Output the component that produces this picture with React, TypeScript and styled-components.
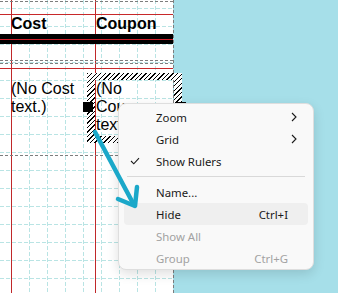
import React from 'react';
import styled, { createGlobalStyle } from 'styled-components';

const GlobalStyle = createGlobalStyle`
  html, body { margin: 0; padding: 0; width: 338px; height: 293px; overflow: hidden; background: #a6dfe9; }
  #root { width: 338px; height: 293px; }
`;

const Stage = styled.div`
  position: relative;
  width: 338px;
  height: 293px;
  display: flex;
  align-items: stretch;
`;

const Page = styled.div`
  position: relative;
  width: 173px;
  height: 293px;
  box-sizing: border-box;
  padding-top: 1px;
  display: flex;
  flex-direction: column;
  background-color: #fff;
  background-image:
    linear-gradient(to right, transparent 11px, #c0282a 11px 12px, transparent 12px 95px, #c0282a 95px 96px, transparent 96px),
    conic-gradient(from 270deg at 1px 4px, #b9e4e4 0 90deg, transparent 0),
    conic-gradient(from 270deg at 4px 1px, #b9e4e4 0 90deg, transparent 0);
  background-size: 100% 100%, 18px 6px, 6px 18px;
  background-position: 0 0, 11px 0, 0 8px;
  font-family: "Liberation Sans", Arial, sans-serif;
  color: #000;
`;

const PageEdge = styled.div`
  width: 1px;
  height: 293px;
  flex: none;
  background: repeating-linear-gradient(to bottom, #7d7d7d 0 3px, transparent 3px 5px);
`;

const DashedRule = styled.div<{ $mt?: number }>`
  flex: none;
  height: 1px;
  margin-top: ${(p) => p.$mt ?? 0}px;
  background: repeating-linear-gradient(to right, #7d7d7d 0 3px, transparent 3px 5px);
`;

const RedRule = styled.div<{ $mt?: number }>`
  flex: none;
  height: 1px;
  margin-top: ${(p) => p.$mt ?? 0}px;
  background: #c8282a;
`;

const ThickRule = styled.div`
  flex: none;
  height: 10px;
  background: linear-gradient(to bottom, #000 0 5px, #d0202a 5px 6px, #000 6px 10px);
`;

const HeaderBand = styled.div`
  flex: none;
  height: 19px;
  display: grid;
  grid-template-columns: 11px 84px 78px;
`;

const HeaderCell = styled.div<{ $pad?: number }>`
  font-size: 16px;
  font-weight: 700;
  line-height: 17px;
  padding-left: ${(p) => p.$pad ?? 0}px;
  white-space: nowrap;
`;

const DetailBand = styled.div`
  flex: none;
  height: 86px;
  box-sizing: border-box;
  padding-top: 11px;
  display: grid;
  grid-template-columns: 11px 76px 8px 78px;
  align-items: start;
`;

const Field = styled.div<{ $pad?: number }>`
  position: relative;
  height: 56px;
  font-size: 16px;
  line-height: 18px;
  padding-left: ${(p) => p.$pad ?? 0}px;
`;

const SelectionFrame = styled.div`
  position: absolute;
  top: -7px;
  bottom: -7px;
  left: -8px;
  right: -9px;
  border-style: solid;
  border-width: 7px 8px;
  border-image: repeating-linear-gradient(135deg, #000 0 1px, #fff 1px 3.2px) 7 8;
  pointer-events: none;
`;

const Handle = styled.span<{ $side: 'left' | 'right' }>`
  position: absolute;
  top: 22px;
  width: 10px;
  height: 10px;
  background: #000;
  ${(p) => (p.$side === 'left' ? 'left: -12px;' : 'right: -13px;')}
`;

const Menu = styled.div`
  position: absolute;
  left: 118px;
  top: 103px;
  width: 196px;
  height: 167px;
  box-sizing: border-box;
  padding: 2px 5px 0;
  background: #f9f9f9;
  border: 1px solid #dedede;
  border-radius: 8px;
  box-shadow: 0 4px 12px rgba(0, 0, 0, 0.13);
  font-family: "Noto Sans", "Open Sans", sans-serif;
  font-size: 11.4px;
  display: flex;
  flex-direction: column;
`;

const MenuItem = styled.div<{ $active?: boolean; $disabled?: boolean }>`
  height: 22px;
  display: grid;
  grid-template-columns: 32px 1fr auto;
  align-items: center;
  padding-right: 11px;
  border-radius: 4px;
  color: ${(p) => (p.$disabled ? '#a2a2a2' : '#1a1a1a')};
  background: ${(p) => (p.$active ? '#efefef' : 'transparent')};
`;

const CheckCell = styled.span`
  display: flex;
  align-items: center;
  padding-left: 6px;
`;

const Shortcut = styled.span`
  margin-right: 9px;
`;

const Separator = styled.div`
  height: 1px;
  margin: 4px 3px;
  background: #d9d9d9;
`;

const Overlay = styled.svg`
  position: absolute;
  left: 0;
  top: 0;
  pointer-events: none;
`;

const Chevron = () => (
  <svg width="6" height="10" viewBox="0 0 6 10">
    <path d="M1 1 L5 5 L1 9" fill="none" stroke="#1a1a1a" strokeWidth="1.1" />
  </svg>
);

const Check = () => (
  <svg width="10" height="8" viewBox="0 0 10 8">
    <path d="M1 4 L3.8 6.8 L9 1.2" fill="none" stroke="#1a1a1a" strokeWidth="1.1" />
  </svg>
);

export default function App() {
  return (
    <>
      <GlobalStyle />
      <Stage>
        <Page>
          <DashedRule />
          <RedRule $mt={12} />
          <HeaderBand>
            <span />
            <HeaderCell>Cost</HeaderCell>
            <HeaderCell $pad={1}>Coupon</HeaderCell>
          </HeaderBand>
          <ThickRule />
          <DashedRule $mt={16} />
          <DashedRule $mt={2} />
          <RedRule $mt={4} />
          <DetailBand>
            <span />
            <Field>(No Cost text.)</Field>
            <span />
            <Field $pad={1}>
              (No Coupon text.)
              <SelectionFrame />
              <Handle $side="left" />
              <Handle $side="right" />
            </Field>
          </DetailBand>
          <DashedRule />
        </Page>
        <PageEdge />
        <Menu>
          <MenuItem><span /><span>Zoom</span><Chevron /></MenuItem>
          <MenuItem><span /><span>Grid</span><Chevron /></MenuItem>
          <MenuItem><CheckCell><Check /></CheckCell><span>Show Rulers</span><span /></MenuItem>
          <Separator />
          <MenuItem><span /><span>Name...</span><span /></MenuItem>
          <MenuItem $active><span /><span>Hide</span><Shortcut>Ctrl+I</Shortcut></MenuItem>
          <MenuItem $disabled><span /><span>Show All</span><span /></MenuItem>
          <MenuItem $disabled><span /><span>Group</span><Shortcut>Ctrl+G</Shortcut></MenuItem>
        </Menu>
        <Overlay width="338" height="293" viewBox="0 0 338 293">
          <path d="M95 132 L134 205" fill="none" stroke="#1ba8c9" strokeWidth="4.5" strokeLinecap="round" />
          <path d="M118 199 L135 206 L137 187" fill="none" stroke="#1ba8c9" strokeWidth="4.5" strokeLinecap="round" strokeLinejoin="round" />
        </Overlay>
      </Stage>
    </>
  );
}
